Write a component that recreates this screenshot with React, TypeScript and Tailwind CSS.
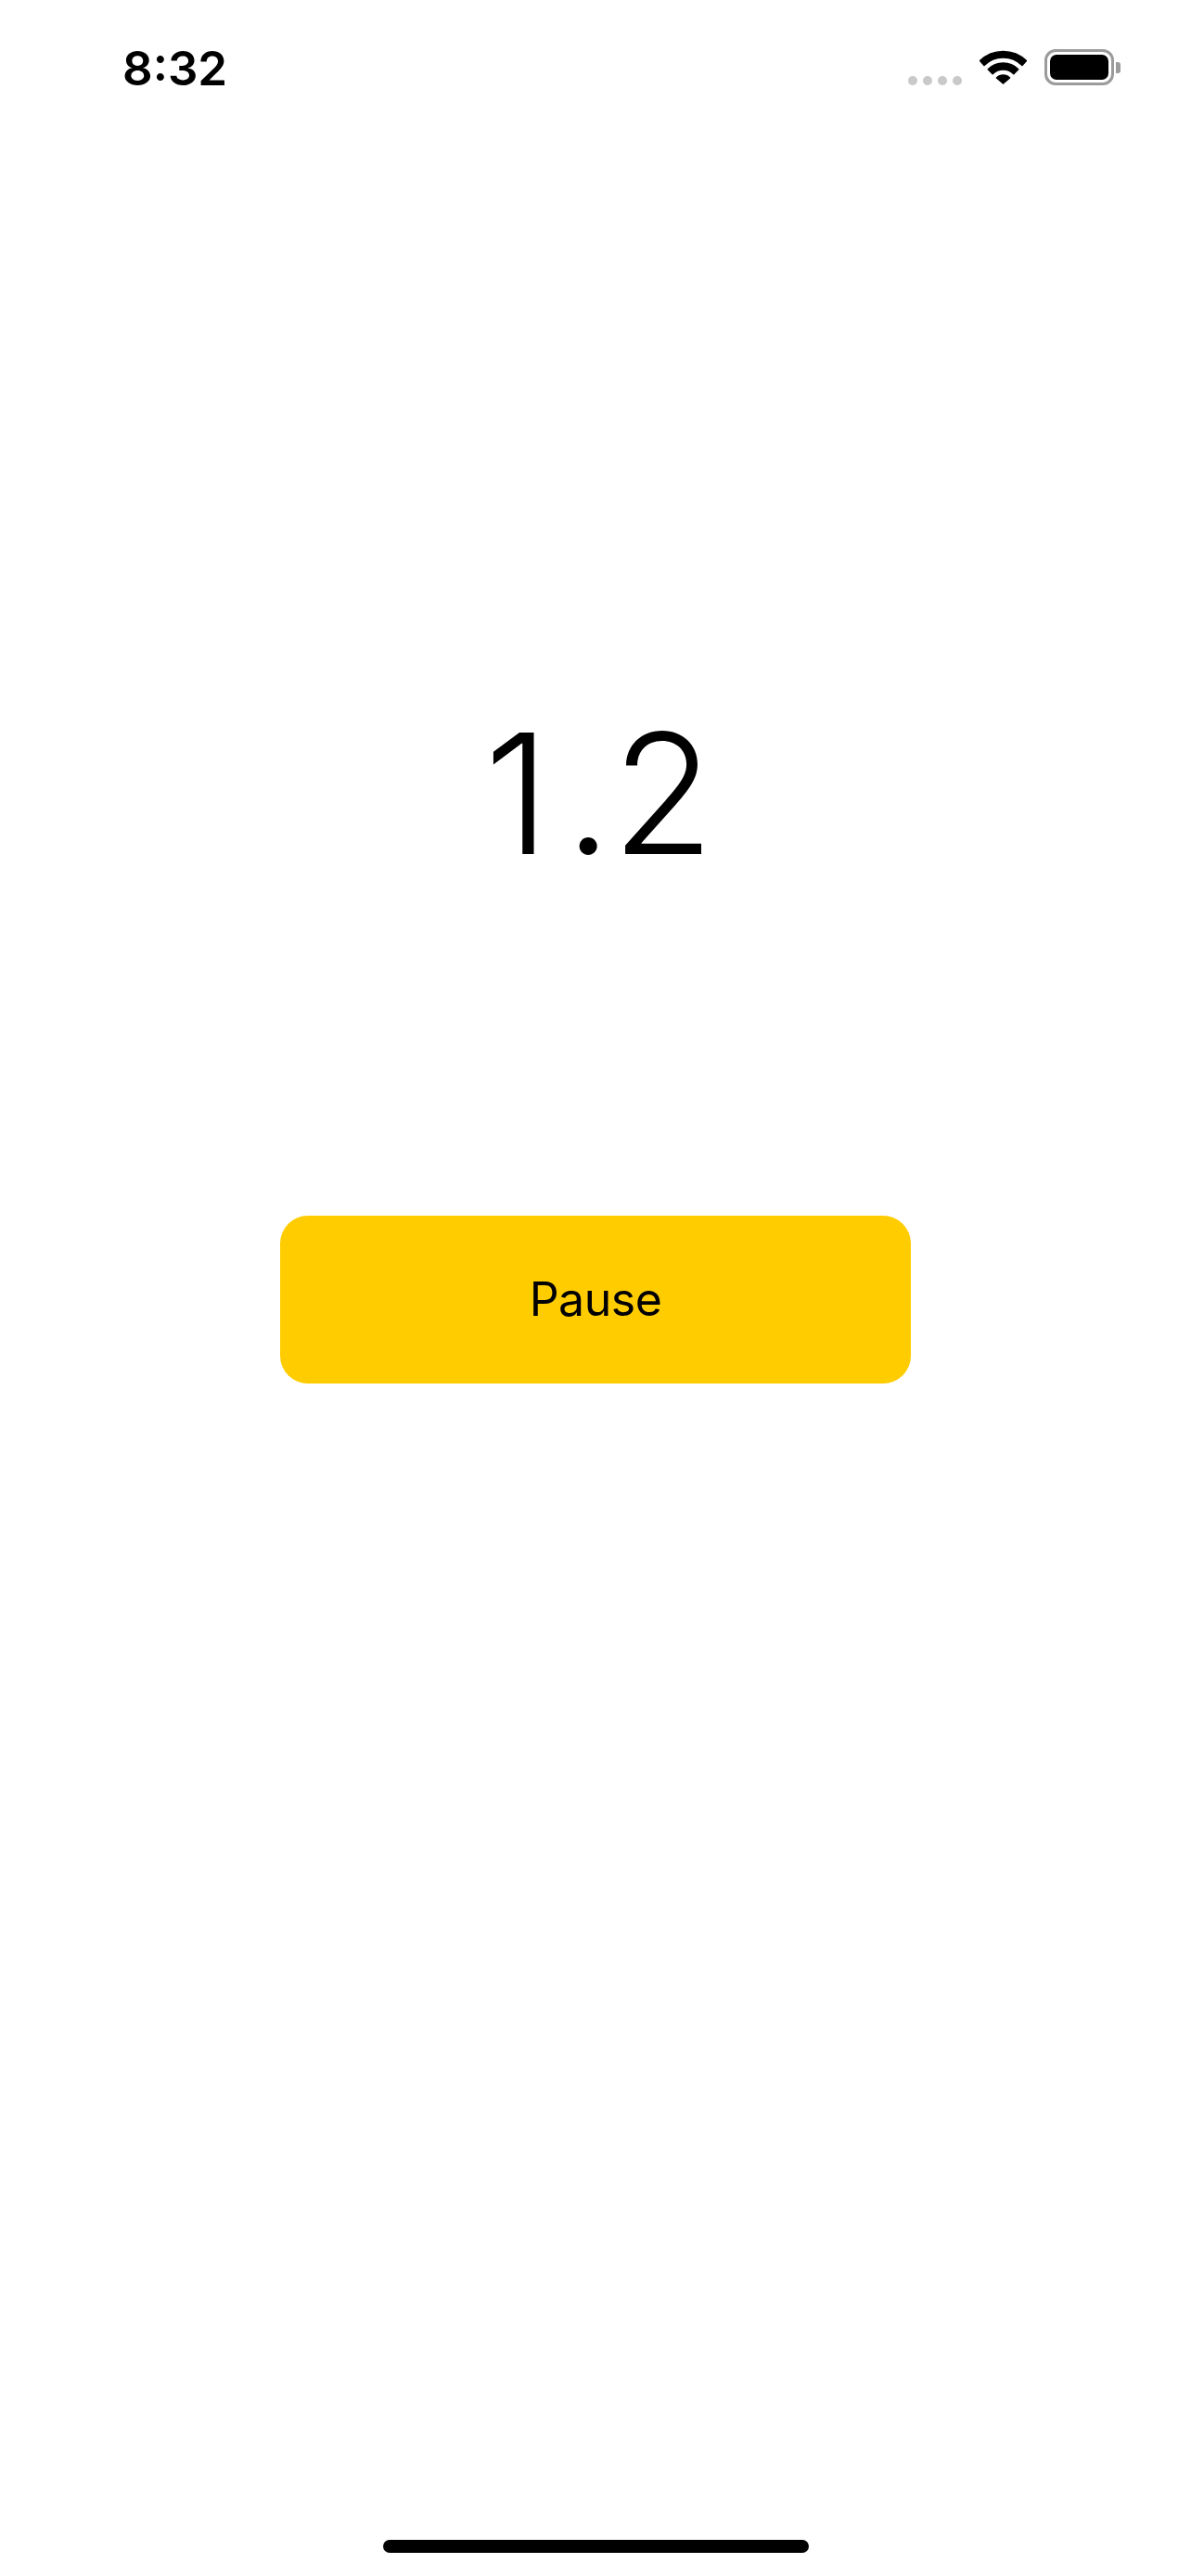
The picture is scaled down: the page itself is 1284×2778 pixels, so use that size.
import React from 'react';

function Wifi() {
  return (
    <svg width="51" height="37" viewBox="0 0 51 37" className="mb-[1px]">
      <g fill="black" stroke="black" strokeWidth="1.5" strokeLinejoin="round">
        <path d="M0.5 11.5 A36 36 0 0 1 50.5 11.5 L46 16.5 A29 29 0 0 0 5 16.5 Z" />
        <path d="M9.24 20.74 A23 23 0 0 1 41.76 20.74 L36.81 25.69 A16 16 0 0 0 14.19 25.69 Z" />
        <path d="M18.43 29.93 A10 10 0 0 1 32.57 29.93 L25.5 36 Z" />
      </g>
    </svg>
  );
}

function Battery() {
  return (
    <div className="flex items-center">
      <div className="w-[75px] h-[39px] rounded-[12px] border-[3.5px] border-[#9b9b9b] p-[3px]">
        <div className="w-full h-full rounded-[7px] bg-black" />
      </div>
      <div className="w-[5px] h-[12px] ml-[2px] rounded-r-[3px] bg-[#9b9b9b]" />
    </div>
  );
}

export default function App() {
  return (
    <div
      className="w-[1284px] h-[2778px] bg-white flex flex-col"
      style={{ fontFamily: 'Inter, "Noto Sans", sans-serif' }}
    >
      {/* status bar */}
      <div className="h-[141px] flex justify-between items-start pl-[132px] pr-[76px]">
        <div className="mt-[48px] text-[51px] leading-none font-semibold text-black">8:32</div>
        <div className="mt-[53px] h-[39px] flex items-end gap-[19px]">
          <div className="flex gap-[6px]">
            {[0, 1, 2, 3].map((i) => (
              <div key={i} className="w-[10px] h-[10px] rounded-full bg-[#c9c9c9]" />
            ))}
          </div>
          <Wifi />
          <Battery />
        </div>
      </div>

      <div className="flex flex-col items-center">
        <div className="mt-[625px] h-[180px] text-[180px] leading-none font-light text-black pl-[8px]">
          <span className="mr-[16px]">1</span>.2
        </div>
        <button className="mt-[365px] w-[680px] h-[181px] rounded-[30px] bg-[#ffcc00] flex items-center justify-center text-[50px] tracking-[-0.5px] text-black">
          Pause
        </button>
      </div>

      <div className="mt-auto mb-[25px] self-center w-[459px] h-[14px] rounded-full bg-black" />
    </div>
  );
}
